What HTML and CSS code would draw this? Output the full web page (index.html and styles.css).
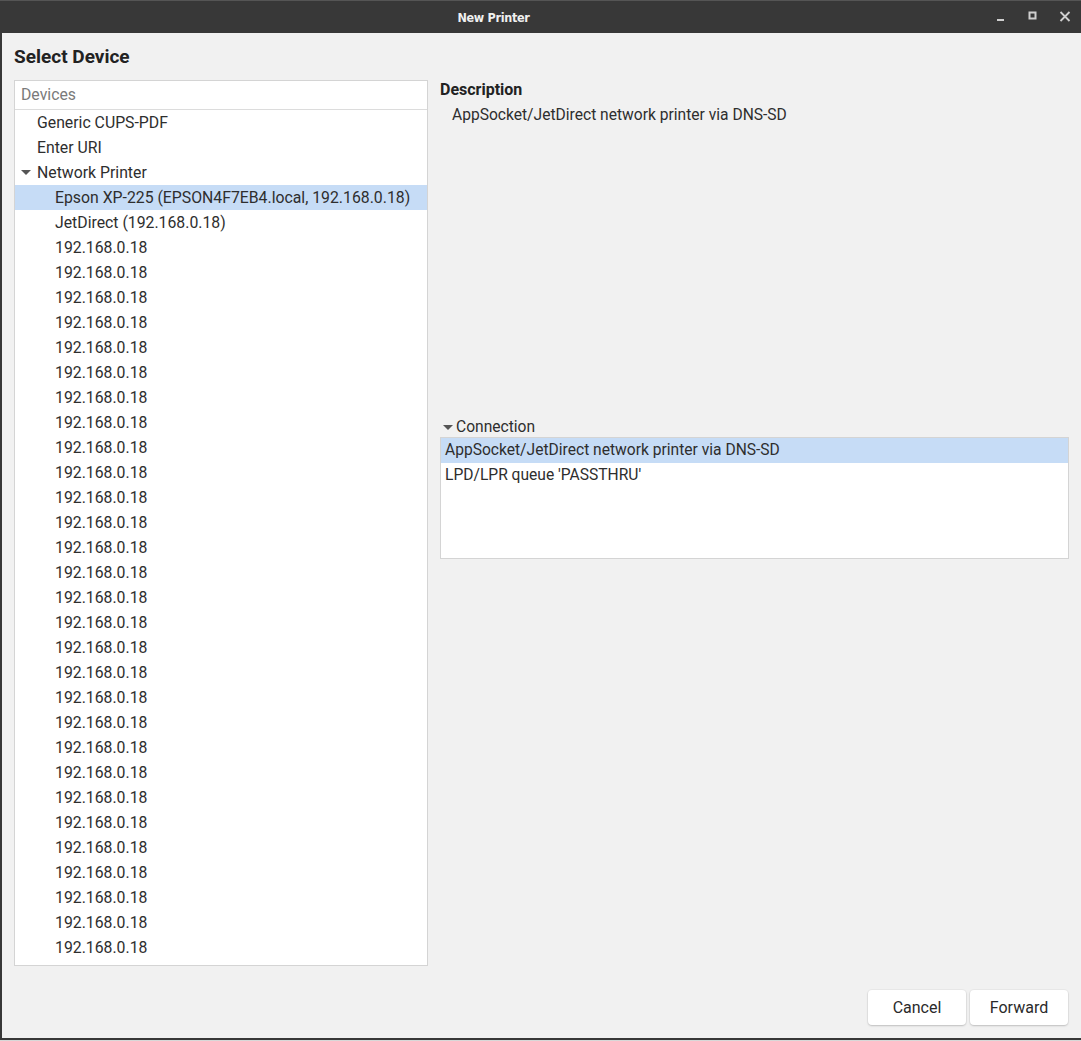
FILE: index.html
```html
<!DOCTYPE html>
<html>
<head>
<meta charset="utf-8">
<title>New Printer</title>
<link rel="stylesheet" href="styles.css">
</head>
<body>
<div class="window">
  <div class="titlebar">
    <span class="title">New Printer</span>
    <div class="wm-buttons">
      <svg class="wm" width="12" height="12" viewBox="0 0 12 12"><rect x="2" y="8" width="7" height="2" fill="#cfcfcf"/></svg>
      <svg class="wm" width="12" height="12" viewBox="0 0 12 12"><rect x="2.5" y="1.5" width="6" height="6" fill="none" stroke="#cfcfcf" stroke-width="2"/></svg>
      <svg class="wm" width="12" height="12" viewBox="0 0 12 12"><path d="M1.5 1 L10.5 10 M10.5 1 L1.5 10" stroke="#cfcfcf" stroke-width="1.8"/></svg>
    </div>
  </div>
  <div class="content">
    <h1 class="heading">Select Device</h1>
    <div class="main">
      <div class="devices">
        <div class="devices-header">Devices</div>
        <div class="rows">
          <div class="row lvl0">Generic CUPS-PDF</div>
          <div class="row lvl0">Enter URI</div>
          <div class="row lvl0 expander"><span class="arrow"></span>Network Printer</div>
          <div class="row lvl1 selected">Epson XP-225 (EPSON4F7EB4.local, 192.168.0.18)</div>
          <div class="row lvl1">JetDirect (192.168.0.18)</div>
          <div class="row lvl1">192.168.0.18</div>
          <div class="row lvl1">192.168.0.18</div>
          <div class="row lvl1">192.168.0.18</div>
          <div class="row lvl1">192.168.0.18</div>
          <div class="row lvl1">192.168.0.18</div>
          <div class="row lvl1">192.168.0.18</div>
          <div class="row lvl1">192.168.0.18</div>
          <div class="row lvl1">192.168.0.18</div>
          <div class="row lvl1">192.168.0.18</div>
          <div class="row lvl1">192.168.0.18</div>
          <div class="row lvl1">192.168.0.18</div>
          <div class="row lvl1">192.168.0.18</div>
          <div class="row lvl1">192.168.0.18</div>
          <div class="row lvl1">192.168.0.18</div>
          <div class="row lvl1">192.168.0.18</div>
          <div class="row lvl1">192.168.0.18</div>
          <div class="row lvl1">192.168.0.18</div>
          <div class="row lvl1">192.168.0.18</div>
          <div class="row lvl1">192.168.0.18</div>
          <div class="row lvl1">192.168.0.18</div>
          <div class="row lvl1">192.168.0.18</div>
          <div class="row lvl1">192.168.0.18</div>
          <div class="row lvl1">192.168.0.18</div>
          <div class="row lvl1">192.168.0.18</div>
          <div class="row lvl1">192.168.0.18</div>
          <div class="row lvl1">192.168.0.18</div>
          <div class="row lvl1">192.168.0.18</div>
          <div class="row lvl1">192.168.0.18</div>
          <div class="row lvl1">192.168.0.18</div>
        </div>
      </div>
      <div class="details">
        <div class="desc-label">Description</div>
        <div class="desc-text">AppSocket/JetDirect network printer via DNS-SD</div>
        <div class="connection">
          <div class="conn-label"><span class="arrow"></span>Connection</div>
          <div class="conn-list">
            <div class="conn-row selected">AppSocket/JetDirect network printer via DNS-SD</div>
            <div class="conn-row">LPD/LPR queue 'PASSTHRU'</div>
          </div>
        </div>
      </div>
    </div>
    <div class="actions">
      <button class="btn">Cancel</button>
      <button class="btn">Forward</button>
    </div>
  </div>
  <div class="bottom-edge"></div>
</div>
</body>
</html>
```
FILE: styles.css
```css
html, body {
  margin: 0;
  padding: 0;
  background: #f1f1f1;
}
body {
  font-family: Roboto, "Liberation Sans", sans-serif;
  color: #2e2e2e;
  width: 1081px;
  height: 1041px;
  overflow: hidden;
}
.window {
  display: flex;
  flex-direction: column;
  height: 1041px;
}
.titlebar {
  height: 32px;
  border-top: 1px solid #555555;
  background: #383838;
  display: flex;
  align-items: center;
  justify-content: center;
  padding-right: 94px;
  position: relative;
  flex: none;
}
.title {
  color: #f0f0f0;
  font-family: "DejaVu Sans Condensed", "DejaVu Sans", sans-serif;
  font-stretch: condensed;
  font-weight: bold;
  font-size: 12.5px;
  letter-spacing: -0.3px;
}
.wm-buttons {
  position: absolute;
  right: 10px;
  top: 10px;
  display: flex;
  gap: 20px;
}
.wm { display: block; }
.content {
  flex: 1;
  border-left: 2px solid #383838;
  border-bottom: 2px solid #383838;
  display: flex;
  flex-direction: column;
  padding: 0 12px 13px 12px;
  min-height: 0;
}
.heading {
  margin: 0;
  font-size: 19px;
  font-weight: bold;
  line-height: 22px;
  padding-top: 13px;
  height: 22px;
  color: #222;
}
.main {
  display: flex;
  gap: 12px;
  margin-top: 12px;
}
.devices {
  width: 412px;
  height: 884px;
  border: 1px solid #d4d4d4;
  background: #ffffff;
  display: flex;
  flex-direction: column;
  overflow: hidden;
}
.devices-header {
  height: 28px;
  line-height: 28px;
  border-bottom: 1px solid #dcdcdc;
  padding-left: 6px;
  color: #7a7a7a;
  font-size: 15.8px;
  flex: none;
}
.rows { flex: 1; }
.row {
  height: 25px;
  line-height: 26px;
  font-size: 15.8px;
  white-space: nowrap;
}
.row.lvl0 { padding-left: 22px; }
.row.lvl1 { padding-left: 40px; }
.row.expander {
  padding-left: 6px;
  display: flex;
  align-items: center;
}
.arrow {
  display: inline-block;
  width: 0;
  height: 0;
  border-left: 5px solid transparent;
  border-right: 5px solid transparent;
  border-top: 5px solid #555;
  margin-right: 6px;
}
.selected { background: #c6dcf6; }
.details {
  flex: 1;
  display: flex;
  flex-direction: column;
}
.desc-label {
  font-weight: bold;
  font-size: 16px;
  line-height: 20px;
  color: #222;
}
.desc-text {
  font-size: 15.6px;
  line-height: 25px;
  padding-left: 12px;
  margin-top: 3px;
}
.connection {
  margin-top: 289px;
}
.conn-label {
  font-size: 15.6px;
  line-height: 20px;
  display: flex;
  align-items: center;
  padding-left: 3px;
}
.conn-label .arrow { margin-right: 3px; }
.conn-list {
  border: 1px solid #d4d4d4;
  background: #fff;
  height: 120px;
}
.conn-row {
  height: 25px;
  line-height: 25px;
  padding-left: 4px;
  font-size: 15.6px;
}
.actions {
  margin-top: auto;
  display: flex;
  justify-content: flex-end;
  gap: 4px;
  padding-right: 1px;
}
.btn {
  width: 98px;
  height: 35px;
  background: #ffffff;
  border: none;
  border-radius: 4px;
  box-shadow: 0 1px 2px rgba(0,0,0,0.18), 0 0 0 1px rgba(0,0,0,0.03);
  font-family: Roboto, "Liberation Sans", sans-serif;
  font-size: 16px;
  color: #2a2a2a;
  padding: 0;
}
.bottom-edge {
  height: 1px;
  background: #d8d8d8;
  flex: none;
}
```
